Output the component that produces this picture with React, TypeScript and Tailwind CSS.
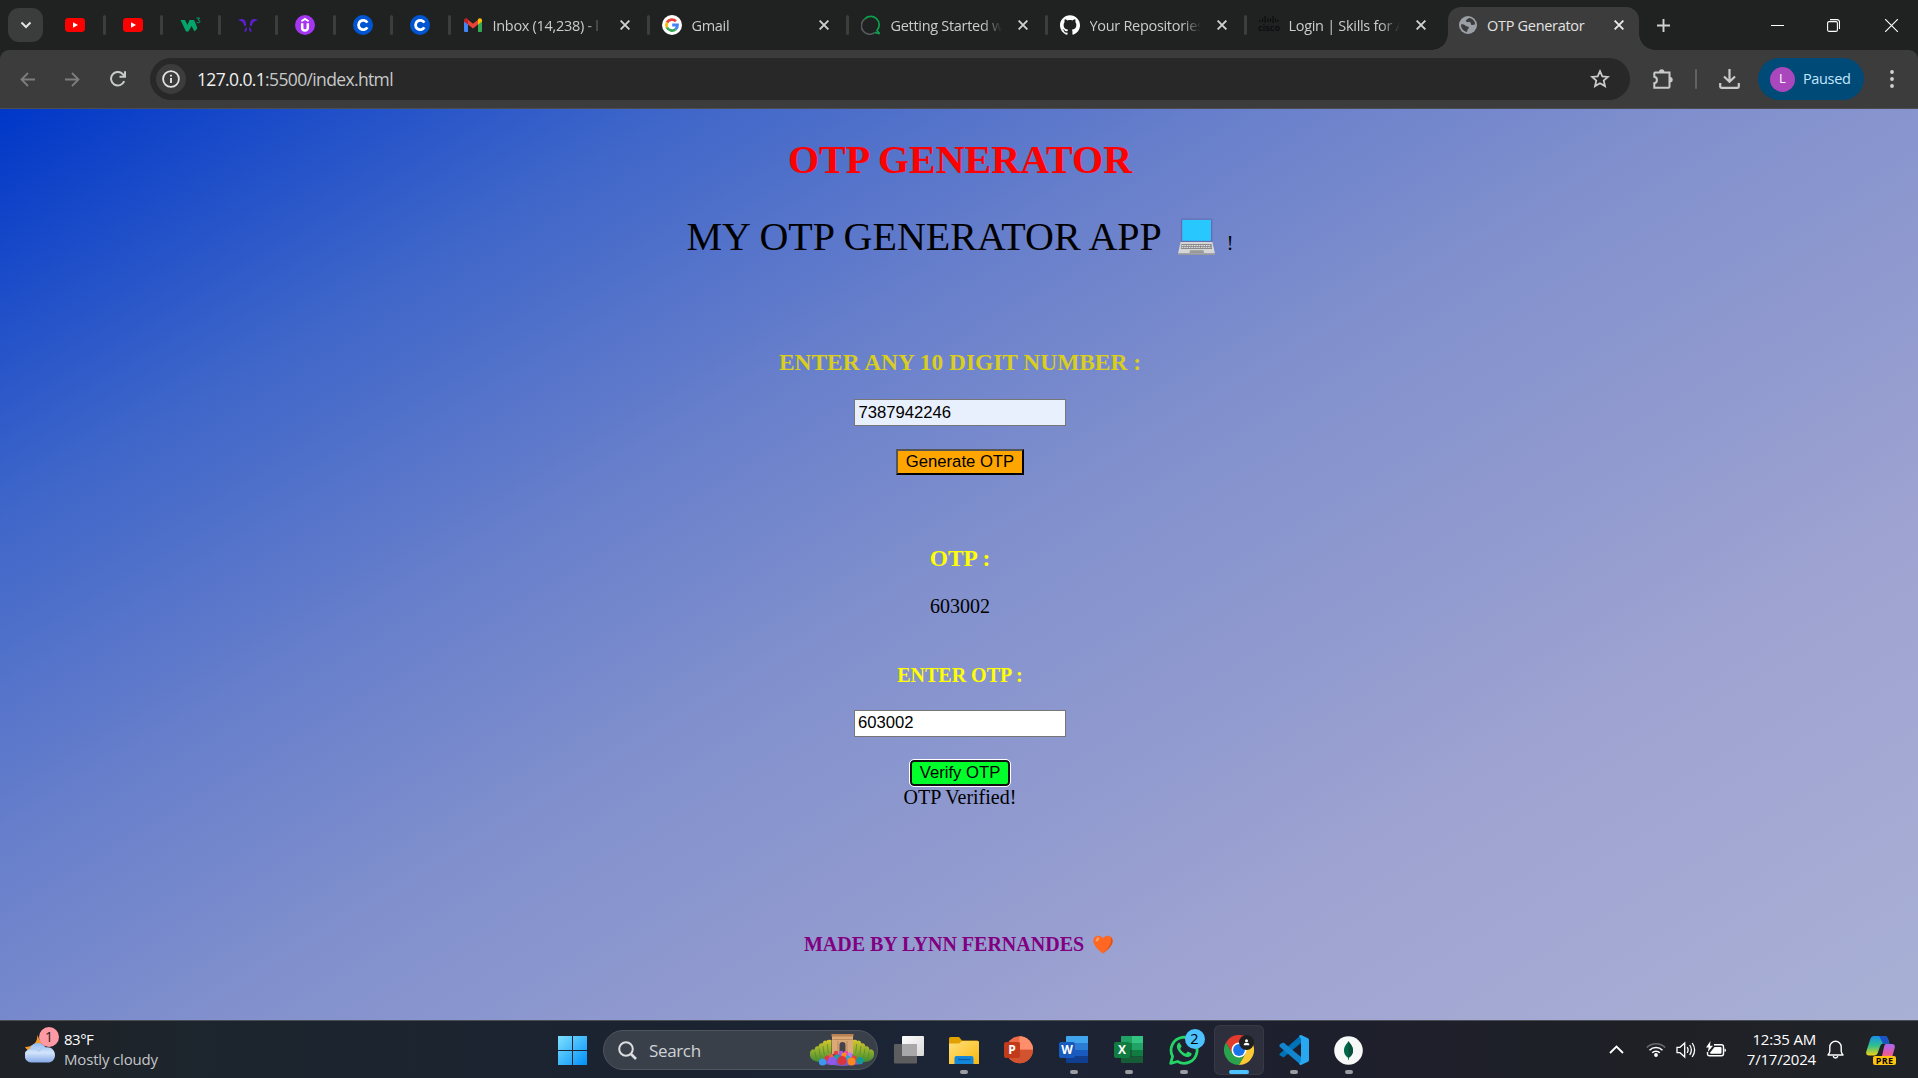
import type { ReactNode } from "react";
import { SiGithub } from "react-icons/si";

const ui = "font-['Open_Sans','Noto_Sans',sans-serif]";

/* ---------- favicons ---------- */

const YouTube = () => (
  <svg width="20" height="14" viewBox="0 0 20 14">
    <rect width="20" height="14" rx="3.4" fill="#f00" />
    <path d="M8 4.2v5.6L13 7z" fill="#fff" />
  </svg>
);

const W3 = () => (
  <svg width="21" height="16" viewBox="0 0 21 16">
    <path d="M.5 3H5l2.500 5L9.500 3H14l2.500 5.500.8 3-2.800 3-3-5.500-3 5.500H6z" fill="#04a56b" />
    <path d="M16.500 1h3L18 3c1.300 0 1.900.6 1.900 1.500 0 1.200-2 1.700-3.300.8" fill="none" stroke="#04a56b" strokeWidth="1" />
  </svg>
);

const Wings = () => (
  <svg width="20" height="14" viewBox="0 0 20 14">
    <g fill="#5b1fd0">
      <path d="M0 2c3.500-1.600 7-1.200 7.800 2.500.3 1.600.4 3-.2 3.800C6.500 8.500 5.600 7 5.300 5 4.500 3.600 2.500 3 0 2z" />
      <path d="M20 2c-3.500-1.600-7-1.200-7.800 2.500-.3 1.600-.4 3 .2 3.800 1.100.2 2-1.300 2.300-3.300C15.500 3.600 17.500 3 20 2z" />
      <path d="M8.200 9l.9 1.500-.9 3H6zM11.800 9l-.9 1.500.9 3H14z" />
    </g>
  </svg>
);

const Udemy = () => (
  <svg width="20" height="20" viewBox="0 0 20 20">
    <circle cx="10" cy="10" r="10" fill="#a435f0" />
    <path d="M6.400 6.300L10 3.900l3.600 2.400" fill="none" stroke="#fff" strokeWidth="1.800" />
    <path d="M7.200 8.300v4.600c0 3.400 5.600 3.400 5.600 0V8.300" fill="none" stroke="#fff" strokeWidth="2.500" />
  </svg>
);

const Coursera = () => (
  <svg width="20" height="20" viewBox="0 0 20 20">
    <circle cx="10" cy="10" r="10" fill="#0056d2" />
    <path d="M14.300 7.600a4.700 4.700 0 1 0 0 4.800" fill="none" stroke="#fff" strokeWidth="2.800" />
  </svg>
);

const GmailIcon = () => (
  <svg width="18" height="14" viewBox="0 0 18 14">
    <path d="M0 3v9.700c0 .8.500 1.300 1.300 1.300H4V5.500z" fill="#4285f4" />
    <path d="M18 3v9.700c0 .8-.5 1.300-1.300 1.300H14V5.500z" fill="#34a853" />
    <path d="M4 1.700l5 4 5-4v4.800l-5 4-5-4z" fill="#ea4335" />
    <path d="M0 2.300C0 0 2.500-.4 4 1v5.500L0 3.600z" fill="#c5221f" />
    <path d="M18 2.300C18 0 15.500-.4 14 1v5.500l4-2.900z" fill="#fbbc04" />
  </svg>
);

const GoogleIcon = () => (
  <svg width="20" height="20" viewBox="0 0 20 20">
    <circle cx="10" cy="10" r="10" fill="#fff" />
    <g fill="none" strokeWidth="2.800">
      <path d="M13.900 6.200A5.600 5.600 0 0 0 5 7.500" stroke="#ea4335" />
      <path d="M5 7.500a5.600 5.600 0 0 0 0 5" stroke="#fbbc05" />
      <path d="M5 12.500a5.600 5.600 0 0 0 8.600 1.800" stroke="#34a853" />
      <path d="M13.600 14.300A5.600 5.600 0 0 0 15.500 10H10.200" stroke="#4285f4" />
    </g>
  </svg>
);

const RingIcon = () => (
  <svg width="20" height="20" viewBox="0 0 20 20" fill="none" strokeWidth="1.700">
    <path d="M3.500 4.200A8.200 8.200 0 0 0 14 17.400" stroke="#55585c" />
    <path d="M3.500 4.200A8.200 8.200 0 0 1 16 15.500l2.700 3.200" stroke="#0aa14b" />
    <path d="M14 17.400l4.500 1.300" stroke="#0aa14b" />
  </svg>
);

const Cisco = () => (
  <span className="flex h-5 w-5 flex-col items-center">
    <svg width="20" height="9" viewBox="0 0 20 9" stroke="#0d0f0f" strokeWidth="1.300">
      <path d="M1 5v2M3.600 3.500V7M6.200 1v7M8.800 3.500V7M11.400 3.500V7M14 1v7M16.600 3.500V7M19 5v2" />
    </svg>
    <span className="h-2 text-[9px] leading-[8px] font-bold text-[#0d0f0f]">cisco</span>
  </span>
);

const Globe = () => (
  <svg width="18" height="18" viewBox="0 0 18 18">
    <circle cx="9" cy="9" r="9" fill="#9aa0a6" />
    <path d="M2 8.500c2.500-.8 3.500.2 4.600 1.200 1 .9 3 .3 3.300 1.800.2 1-1.500 1.300-1.400 2.600 0 .9-.2 1.500-.9 2A7.300 7.300 0 0 1 2 8.500zM10.500 2c-1.900 0-1.600 1.300-3 1.800-1 .5-.7 2 .6 2.300 1.500.3 2-.6 3.200.2.900.7.100 2.200 1.400 2.600 1 .3 1.900-.5 3.500-.5A7.300 7.300 0 0 0 10.500 2z" fill="#3c3c3c" />
  </svg>
);

const Cross = ({ color = "#d0d2d2" }: { color?: string }) => (
  <svg width="10" height="10" viewBox="0 0 10 10" stroke={color} strokeWidth="1.900">
    <path d="M.6.600l8.800 8.800M9.400.600L.6 9.400" />
  </svg>
);

/* ---------- browser chrome ---------- */

function Divider() {
  return <span className="h-5 w-[3px] shrink-0 rounded-full bg-[#3c3e3e]" />;
}

function PinnedTab({ children }: { children: ReactNode }) {
  return (
    <div className="flex h-full w-[57.5px] shrink-0 items-center">
      <span className="flex flex-1 justify-center">{children}</span>
      <Divider />
    </div>
  );
}

function Tab({ icon, title, last }: { icon: ReactNode; title: string; last?: boolean }) {
  return (
    <div className="flex h-full w-[199px] shrink-0 items-center pl-[12.500px]">
      <span className="flex w-5 shrink-0 justify-center">{icon}</span>
      <span className="ml-[9.500px] w-[112px] shrink-0 overflow-hidden pt-px text-[14.500px] leading-5 tracking-[-0.300px] whitespace-nowrap text-[#c9cccb] [mask-image:linear-gradient(to_right,#000_82%,transparent_99%)]">
        {title}
      </span>
      <span className="ml-[15px] flex w-[10px] shrink-0">
        <Cross />
      </span>
      <span className="flex-1" />
      {!last && <Divider />}
    </div>
  );
}

function TabStrip() {
  return (
    <div className="flex h-[50px] items-center bg-[#202222]">
      <button className="ml-2 flex h-[34px] w-[35px] shrink-0 items-center justify-center rounded-[11px] bg-[#3b3c3c]">
        <svg width="12" height="8" viewBox="0 0 12 8" fill="none" stroke="#e3e3e3" strokeWidth="2">
          <path d="M1.500 1.500L6 6l4.500-4.500" />
        </svg>
      </button>
      <div className="ml-[5px] flex h-full items-center">
        <PinnedTab><YouTube /></PinnedTab>
        <PinnedTab><YouTube /></PinnedTab>
        <PinnedTab><W3 /></PinnedTab>
        <PinnedTab><Wings /></PinnedTab>
        <PinnedTab><Udemy /></PinnedTab>
        <PinnedTab><Coursera /></PinnedTab>
        <PinnedTab><Coursera /></PinnedTab>
      </div>
      <Tab icon={<GmailIcon />} title="Inbox (14,238) - l" />
      <Tab icon={<GoogleIcon />} title="Gmail" />
      <Tab icon={<RingIcon />} title="Getting Started w" />
      <Tab icon={<SiGithub size={20} color="#fff" />} title="Your Repositories" />
      <Tab icon={<Cisco />} title="Login | Skills for A" last />
      <div className="flex h-full items-end">
        <span className="-ml-[13.500px] h-4 w-4 bg-[radial-gradient(circle_at_0_0,transparent_15.500px,#3c3c3c_16px)]" />
        <div className="flex h-[43px] w-[191px] items-center rounded-t-[13px] bg-[#3c3c3c] pb-[7px] pl-[11px]">
          <Globe />
          <span className="ml-2.5 w-[127px] pt-px text-[14.500px] leading-5 tracking-[-0.300px] whitespace-nowrap text-[#e3e3e3]">OTP Generator</span>
          <Cross color="#e8e8e8" />
        </div>
        <span className="h-4 w-4 bg-[radial-gradient(circle_at_100%_0,transparent_15.500px,#3c3c3c_16px)]" />
      </div>
      <svg className="ml-[2px]" width="13" height="13" viewBox="0 0 13 13" stroke="#d0d2d2" strokeWidth="1.900">
        <path d="M6.500 0v13M0 6.500h13" />
      </svg>
      <div className="mr-5 ml-auto flex items-center text-white">
        <span className="mr-[43px] h-px w-[13px] bg-white" />
        <svg className="mr-[45px]" width="13" height="13" viewBox="0 0 13 13" fill="none" stroke="#fff" strokeWidth="1.100">
          <rect x=".6" y="2.600" width="9.800" height="9.800" rx="1.500" />
          <path d="M3 .6h7.200a2.300 2.300 0 0 1 2.300 2.300V10" />
        </svg>
        <svg width="13" height="13" viewBox="0 0 13 13" stroke="#fff" strokeWidth="1.100">
          <path d="M0 0l13 13M13 0L0 13" />
        </svg>
      </div>
    </div>
  );
}

function Toolbar() {
  return (
    <div className="bg-[#202222]">
      <div className="flex h-[59px] items-center rounded-t-[9px] border-b border-[#4b4d50] bg-[#3c3c3c]">
        <svg className="ml-5" width="15" height="15" viewBox="0 0 15 15" fill="none" stroke="#7c7d7d" strokeWidth="1.800">
          <path d="M15 7.500H1.500M8 1L1.500 7.500 8 14" />
        </svg>
        <svg className="ml-[30px]" width="15" height="15" viewBox="0 0 15 15" fill="none" stroke="#7c7d7d" strokeWidth="1.800">
          <path d="M0 7.500h13.500M7 1l6.500 6.500L7 14" />
        </svg>
        <svg className="ml-[30px]" width="16" height="16" viewBox="0 0 16 16" fill="none" stroke="#c9cbcb" strokeWidth="2">
          <path d="M14.200 10.200A6.800 6.800 0 1 1 13 3.300L14.500 5" />
          <path d="M9.500 5.700h5.500V.3" />
        </svg>
        <div className="ml-[24px] flex h-[42px] w-[1480px] shrink-0 items-center rounded-full bg-[#282828] pr-5 pl-[6px]">
          <span className="flex h-[30px] w-[30px] shrink-0 items-center justify-center rounded-full bg-[#3c3c3c]">
            <svg width="18" height="18" viewBox="0 0 18 18">
              <circle cx="9" cy="9" r="7.900" fill="none" stroke="#e3e3e3" strokeWidth="1.800" />
              <path d="M9 8v5M9 4.800v1.800" stroke="#e3e3e3" strokeWidth="1.900" />
            </svg>
          </span>
          <span className="ml-[11px] text-[17.500px] leading-6 tracking-[-0.640px] text-[#c7c9c9]">
            <span className="text-[#f0f0f0]">127.0.0.1</span>:5500/index.html
          </span>
          <svg className="ml-auto" width="20" height="20" viewBox="0 0 20 20" fill="none" stroke="#c9cbcb" strokeWidth="1.800">
            <path d="M10 2.200l2.300 5.200 5.600.5-4.200 3.700 1.300 5.500L10 14.200l-5 2.900 1.300-5.500L2.100 7.900l5.600-.5z" />
          </svg>
        </div>
        <svg className="ml-[22px]" width="22" height="22" viewBox="0 0 22 22">
          <path
            d="M3 4.500h14.500V18.700c0 .6-.4 1-1 1H2.300v-4.500c3.500-.4 3.500-6 0-6.400V5.500c0-.6.300-1 .7-1z"
            fill="none"
            stroke="#c9cbcb"
            strokeWidth="2"
          />
          <path d="M7 4a2.700 2.700 0 0 1 5.400 0zM18 9a2.700 2.700 0 0 1 0 5.400z" fill="#c9cbcb" />
        </svg>
        <span className="ml-[21px] h-5 w-0.5 rounded bg-[#5f6162]" />
        <svg className="ml-[22px]" width="21" height="20" viewBox="0 0 21 20" fill="none" stroke="#c9cbcb" strokeWidth="2.200">
          <path d="M10.500 0v12.500M5 7.500l5.500 5.300L16 7.500" />
          <path d="M1.200 14v3.600c0 .7.500 1.200 1.200 1.200h16.200c.7 0 1.200-.5 1.200-1.200V14" />
        </svg>
        <div className="ml-[18px] flex h-[42px] w-[106px] items-center rounded-full bg-[#004a77] pl-3">
          <span className="flex h-[25px] w-[25px] items-center justify-center rounded-full bg-[#ab47bc] text-[13px] text-white">L</span>
          <span className="ml-2 text-[14.500px] tracking-[-0.350px] text-[#c2e7ff]">Paused</span>
        </div>
        <svg className="ml-[26px]" width="4" height="18" viewBox="0 0 4 18" fill="#d0d2d2">
          <circle cx="2" cy="2" r="1.900" />
          <circle cx="2" cy="9" r="1.900" />
          <circle cx="2" cy="16" r="1.900" />
        </svg>
      </div>
    </div>
  );
}

/* ---------- page ---------- */

const Laptop = () => (
  <svg className="ml-[16px] h-[37px] w-[37px] translate-y-[5px]" viewBox="0 0 37 37">
    <rect x="2.800" y=".4" width="31.600" height="24" rx="1.600" fill="#6b6bb0" />
    <rect x="4.200" y="1.800" width="28.800" height="21" fill="#28c8ff" />
    <path d="M2.600 24h31.800L37 35.500H0z" fill="#d6d6d6" />
    <path d="M0 35.500h37V37H0z" fill="#999" />
    <path d="M3.500 26h30l.6 5H2.900z" fill="#8a8a8a" />
    <path d="M4 27.500h29M3.700 29.400h29.600" stroke="#e6e6e6" strokeWidth="1" strokeDasharray="1.600 .8" />
    <path d="M12 32.300h13.500l.5 2.700H11.500z" fill="#999" />
  </svg>
);

const Heart = () => (
  <svg className="ml-[9px] h-[19px] w-5 translate-y-[3px]" viewBox="0 0 20 19">
    <path d="M10 18.600C6 15.500.3 11 .3 5.800.3.300 7.500-1.200 10 3.300 12.500-1.200 19.700.300 19.700 5.800 19.700 11 14 15.500 10 18.600z" fill="#ff6723" />
    <path d="M18 2.200c3 3 1.500 8-2.500 11.500L10 18.600c5-5 8.500-9.500 8-16.400z" fill="#d9531f" />
    <ellipse cx="4.500" cy="4.300" rx="1.500" ry="2.400" transform="rotate(35 4.500 4.300)" fill="#ff9a65" />
  </svg>
);

function Page() {
  return (
    <main className="flex h-[911px] flex-col items-center bg-[linear-gradient(149deg,#0037c8_0%,#3d65c9_19%,#667ecb_35%,#8190cd_50%,#9ea3d1_76%,#a9b0d5_100%)] pl-[2px] font-['Liberation_Serif','Times_New_Roman',serif] text-[20px] leading-[23px] text-black">
      <h1 className="mt-[28px] text-[40px] leading-[46px] font-bold text-[#ff0000]">OTP GENERATOR</h1>
      <p className="mt-[30px] flex h-[46px] items-baseline whitespace-nowrap">
        <span className="text-[40px] leading-[46px]">MY OTP GENERATOR APP</span>
        <Laptop />
        <span className="ml-[12px]">!</span>
      </p>
      <h3 className="mt-[90px] text-[23.400px] leading-[27px] font-bold text-[#d9cd20]">ENTER ANY 10 DIGIT NUMBER :</h3>
      <input
        readOnly
        value="7387942246"
        className="mt-[23px] h-[27px] w-[212px] border border-[#767676] bg-[#e8f0fe] px-[3.500px] font-['Liberation_Sans',Arial,sans-serif] text-[16.670px] outline-none"
      />
      <button className="mt-[23px] flex h-[26px] w-[128px] items-center justify-center border-2 border-t-[#555] border-r-black border-b-black border-l-[#555] bg-[#ffa500] pb-px font-['Liberation_Sans',Arial,sans-serif] text-[16.670px]">
        Generate OTP
      </button>
      <h3 className="mt-[70px] text-[23.400px] leading-[27px] font-bold text-[#ffff00]">OTP :</h3>
      <p className="mt-[23px]">603002</p>
      <h4 className="mt-[46px] font-bold text-[#ffff00]">ENTER OTP :</h4>
      <input
        readOnly
        value="603002"
        className="mt-[23px] h-[27px] w-[212px] border border-[#767676] bg-white px-[3px] pb-0.5 font-['Liberation_Sans',Arial,sans-serif] text-[16.670px] outline-none"
      />
      <button className="mt-[23px] flex h-[26px] w-[100px] items-center justify-center rounded-[4px] border-2 border-[#101010] bg-[#00ff2b] pb-0.5 font-['Liberation_Sans',Arial,sans-serif] text-[16.670px] outline outline-white">
        Verify OTP
      </button>
      <p>OTP Verified!</p>
      <h4 className="mt-[123px] mr-[3px] flex items-baseline font-bold text-[#800080]">
        MADE BY LYNN FERNANDES
        <Heart />
      </h4>
    </main>
  );
}

/* ---------- taskbar ---------- */

const Weather = () => (
  <svg width="34" height="36" viewBox="0 0 34 36">
    <defs>
      <linearGradient id="cloud" x1="0" y1="0" x2="0" y2="1">
        <stop offset="0" stopColor="#8fb9f2" />
        <stop offset=".5" stopColor="#d3e4fb" />
        <stop offset="1" stopColor="#86a9e8" />
      </linearGradient>
    </defs>
    <path d="M12 7c1.200 7-4 12-12 12 3 6 15 7 18-1z" fill="#f59a23" />
    <path d="M6 34.500a7 7 0 0 1-1-13.800C6.500 14 17 12.500 20.500 19.500c5-1.500 9.500 2.500 9.500 7.500s-3.500 7.500-7 7.500z" fill="url(#cloud)" />
    <path d="M5 21c4-1 7 0 9 2 2-2.500 4-3.500 6.500-3.500" stroke="#aecbf6" strokeWidth="1.500" fill="none" />
  </svg>
);

const Start = () => (
  <svg width="29" height="29" viewBox="0 0 29 29">
    <defs>
      <linearGradient id="win" x1="0" y1="0" x2="1" y2="1">
        <stop offset="0" stopColor="#7fe0ff" />
        <stop offset="1" stopColor="#0090f8" />
      </linearGradient>
    </defs>
    <path d="M0 0h14v14H0zM15 0h14v14H15zM0 15h14v14H0zM15 15h14v14H15z" fill="url(#win)" />
  </svg>
);

const SearchArt = () => (
  <svg width="64" height="32" viewBox="0 0 64 32">
    <defs>
      <linearGradient id="hedge" x1="0" y1="0" x2="0" y2="1">
        <stop offset="0" stopColor="#d4c62c" />
        <stop offset=".5" stopColor="#8fae2e" />
        <stop offset="1" stopColor="#3d8a34" />
      </linearGradient>
    </defs>
    <path d="M0 18q2-4 4.500-2 .5-5 4-3.500 1-4 4-3 1-4 4-2.500 1-2 5-1v22H9Q1 27 0 22z" fill="url(#hedge)" />
    <path d="M64 18q-2-4-4.500-2-.5-5-4-3.500-1-4-4-3-1-4-4-2.500-1-2-5-1v22h13q7-1 8.500-6z" fill="url(#hedge)" />
    <path d="M4.800 17.500l1.500 7M9 14.500l1.500 9M13 12l1.300 9M17.300 10l1 9M59.200 17.500l-1.500 7M55 14.500l-1.500 9M51 12l-1.300 9M46.700 10l-1 9" stroke="#5c8a2c" strokeWidth=".8" />
    <path d="M22 0h21v20H22z" fill="#dba877" />
    <path d="M21.500 0h22v2.500h-22z" fill="#b98253" />
    <path d="M22.500 5.500h20M28 7v12M37 7v12" stroke="#b98253" strokeWidth=".8" />
    <path d="M29.500 20v-9a3 3 0 0 1 6 0v9z" fill="#45424c" />
    <g>
      <path d="M20 24q12-9 24 0l9 6-20 2-21-2z" fill="#7b5cc4" />
      <circle cx="26" cy="19" r="2.300" fill="#e4423f" />
      <circle cx="31" cy="19" r="2.300" fill="#9b5cf0" />
      <circle cx="36" cy="19" r="2.300" fill="#f04d9a" />
      <circle cx="21" cy="22" r="2.500" fill="#e4653f" />
      <circle cx="27" cy="23" r="2.600" fill="#16a5a5" />
      <circle cx="34" cy="21" r="2.600" fill="#ff8a1f" />
      <circle cx="40" cy="21" r="2.500" fill="#b37cf6" />
      <circle cx="44" cy="24" r="2.600" fill="#e4423f" />
      <circle cx="38" cy="24" r="2.500" fill="#2aa9c9" />
      <circle cx="17" cy="24" r="2.600" fill="#d93a4b" />
      <circle cx="12.500" cy="28" r="3.600" fill="#3f97f2" />
      <circle cx="22" cy="27" r="4" fill="#9457ec" />
      <circle cx="32" cy="26.500" r="4.600" fill="#d8353f" />
      <circle cx="41.500" cy="27.500" r="4" fill="#ff861c" />
      <circle cx="50" cy="26.500" r="3.500" fill="#129a98" />
    </g>
  </svg>
);

const TaskView = () => (
  <svg width="30" height="28" viewBox="0 0 30 28">
    <defs>
      <linearGradient id="tv" x1="0" y1="0" x2="1" y2="1">
        <stop offset="0" stopColor="#fff" />
        <stop offset="1" stopColor="#d8d8d8" />
      </linearGradient>
    </defs>
    <rect y="8" width="23" height="19.500" rx="1" fill="#5d5d5f" />
    <rect x="8" width="22" height="20" rx="1" fill="url(#tv)" />
    <rect x="8" y="8" width="15" height="12" fill="#a8a8aa" />
  </svg>
);

const Folder = () => (
  <svg width="30" height="27" viewBox="0 0 30 27">
    <defs>
      <linearGradient id="fold" x1="0" y1="0" x2="1" y2="1">
        <stop offset="0" stopColor="#ffe07a" />
        <stop offset="1" stopColor="#f9b90f" />
      </linearGradient>
    </defs>
    <path d="M0 1.500Q0 0 1.500 0H10l3 3.500h15q2 0 2 2V12H0z" fill="#e2a100" />
    <path d="M0 6.500h10L13 4h15.500Q30 4 30 5.500V27H0z" fill="url(#fold)" />
    <path d="M5.500 27v-6q0-2 2-2h15q2 0 2 2v6z" fill="#1286d8" />
    <path d="M9 22.500h12.500" stroke="#0b5ca8" strokeWidth="1.200" />
  </svg>
);

function Letter({ children, className }: { children: string; className: string }) {
  return (
    <span className={`absolute top-[6px] left-0 flex h-4 w-4 items-center justify-center rounded-[2px] text-[12px] leading-4 font-bold text-white ${className}`}>
      {children}
    </span>
  );
}

const PowerPoint = () => (
  <span className="relative h-[28px] w-[29px]">
    <svg width="29" height="28" viewBox="0 0 29 28">
      <circle cx="15.500" cy="13.700" r="13.500" fill="#ed6c47" />
      <path d="M15.500.2A13.500 13.500 0 0 1 29 13.700H15.500z" fill="#ff8f6b" />
      <path d="M29 13.700a13.500 13.500 0 0 1-27 0z" fill="#d35230" />
    </svg>
    <Letter className="bg-[#c13b1b]">P</Letter>
  </span>
);

const Word = () => (
  <span className="relative h-[28px] w-[29px]">
    <svg width="29" height="28" viewBox="0 0 29 28">
      <path d="M7 1q0-1 1-1h21v7H7z" fill="#41a5ee" />
      <path d="M7 7h22v7H7z" fill="#2b7cd3" />
      <path d="M7 14h22v6.500H7z" fill="#185abd" />
      <path d="M7 20.500h22V27H8q-1 0-1-1z" fill="#103f91" />
    </svg>
    <Letter className="bg-[#185abd]">W</Letter>
  </span>
);

const Excel = () => (
  <span className="relative h-[28px] w-[29px]">
    <svg width="29" height="28" viewBox="0 0 29 28">
      <path d="M7 1q0-1 1-1h10v7H7z" fill="#21a366" />
      <path d="M18 0h11v7H18z" fill="#33c481" />
      <path d="M7 7h11v7H7z" fill="#107c41" />
      <path d="M18 7h11v7H18z" fill="#21a366" />
      <path d="M7 14h11v6.500H7z" fill="#185c37" />
      <path d="M18 14h11v6.500H18z" fill="#107c41" />
      <path d="M7 20.500h22V27H8q-1 0-1-1z" fill="#185c37" />
    </svg>
    <Letter className="bg-[#107c41]">X</Letter>
  </span>
);

const WhatsApp = () => (
  <span className="relative h-[30px] w-[30px]">
    <svg width="30" height="30" viewBox="0 0 30 30">
      <path d="M1.700 28.300l1.900-6.900A13 13 0 1 1 8.500 26.500z" fill="none" stroke="#25d366" strokeWidth="2.800" strokeLinejoin="round" />
      <path d="M10.500 7.500c-2.500 1-3.500 4-1.500 7.500 2.500 4.500 7 7.500 10.500 7 2.500-.4 3.500-2.500 3-3.700l-3.700-1.800-2 2.200c-2.600-1-4.600-3-5.600-5.300l1.500-2z" fill="#25d366" />
    </svg>
    <span className="absolute -top-[6px] left-4 flex h-5 w-5 items-center justify-center rounded-full bg-[#4cc2ff] text-[14.500px] leading-5 text-black">2</span>
  </span>
);

const Chrome = () => (
  <span className="relative h-[30px] w-[30px]">
    <svg width="30" height="30" viewBox="0 0 30 30">
      <path d="M2 7.500A15 15 0 0 1 28 7.500H15L8.500 18.700z" fill="#e33b2e" />
      <path d="M2 7.500A15 15 0 0 0 15 30l6.500-11.300H8.500z" fill="#2ba24c" />
      <path d="M28 7.500A15 15 0 0 1 15 30l6.500-11.300L15 7.500z" fill="#fcc934" />
      <circle cx="15" cy="15" r="7.500" fill="#fff" />
      <circle cx="15" cy="15" r="5.900" fill="#1a73e8" />
    </svg>
    <svg className="absolute top-0 left-[15px]" width="15" height="15" viewBox="0 0 15 15">
      <circle cx="7.500" cy="7.500" r="7.500" fill="#1d1f21" />
      <circle cx="7.500" cy="5.800" r="1.500" fill="#fff" />
      <path d="M4.700 10.200q0-2.400 2.800-2.400t2.800 2.400z" fill="#fff" />
    </svg>
  </span>
);

const VSCode = () => (
  <svg width="30" height="30" viewBox="0 0 30 30">
    <path d="M22 0v8L4.500 22.500 1.700 20.800Q-.5 20 1 18.500z" fill="#0072b8" />
    <path d="M22 30v-8L4.500 7.500 1.700 8.700Q-.5 10.500 1 12z" fill="#1285cf" />
    <path d="M22 0l7 3.300q1 .5 1 1.700v20q0 1.200-1 1.700L22 30q-1 0-2-1l2-3V4l-2-3q1-1 2-1z" fill="#27a8f0" />
  </svg>
);

const Mongo = () => (
  <svg width="29" height="29" viewBox="0 0 29 29">
    <circle cx="14.500" cy="14.500" r="14.300" fill="#f7f8f8" />
    <path d="M14.500 5c1 2.500 4.500 4.500 4.500 9.500 0 4-2.500 6-4 7.200l-.2 2.300h-.6l-.2-2.300c-1.500-1.200-4-3.200-4-7.200 0-5 3.500-7 4.500-9.500z" fill="#00684a" />
    <path d="M14.500 5c1 2.500 4.500 4.500 4.500 9.500 0 4-2.500 6-4.500 7.200z" fill="#0b4f3c" />
  </svg>
);

function TaskbarItem({ children, mark = "dot" }: { children: ReactNode; mark?: "dot" | "none" | "active" }) {
  return (
    <div className="flex h-full w-[55px] shrink-0 justify-center pt-1">
      <div className={`flex h-[50px] w-[50px] flex-col items-center rounded-[6px] ${mark === "active" ? "bg-[#2d303c] ring-1 ring-[#363a45] ring-inset" : ""}`}>
        <span className="flex h-[45px] items-center pt-[5px]">{children}</span>
        {mark === "dot" && <span className="h-1 w-2 rounded-full bg-[#9b9ca1]" />}
        {mark === "active" && <span className="h-1 w-5 rounded-full bg-[#4cc2ff]" />}
      </div>
    </div>
  );
}

const Copilot = () => (
  <span className="relative h-[30px] w-[30px]">
    <svg width="29" height="28" viewBox="0 0 29 28">
      <defs>
        <linearGradient id="cp1" x1="0" y1="0" x2="0" y2="1">
          <stop offset="0" stopColor="#1c8fe8" />
          <stop offset=".5" stopColor="#2fc08c" />
          <stop offset="1" stopColor="#f2d313" />
        </linearGradient>
        <linearGradient id="cp2" x1="0" y1="0" x2="0" y2="1">
          <stop offset="0" stopColor="#a868f5" />
          <stop offset=".6" stopColor="#e858a0" />
          <stop offset="1" stopColor="#ff8a4a" />
        </linearGradient>
      </defs>
      <path d="M8 0h11q2 0 3 3l1.500 4.500H17q-2 0-3 3l-2.500 7q-1 2-3 2H3q-3.500 0-2.700-4L4 4q1-4 4-4z" fill="url(#cp1)" />
      <path d="M13 0h6q2 0 3 3l1.500 4.500H17z" fill="#1c53c9" />
      <path d="M20 8h6q3.500 0 2.700 4l-2.600 9q-1 3-4 3H12q3-1 4-4l2-9q.5-3 2-3z" fill="url(#cp2)" />
    </svg>
    <span className="absolute top-[20px] left-[7px] flex h-[9px] w-[23px] items-center justify-center rounded-[2px] bg-[#ffc20e] text-[9px] leading-[9px] font-bold tracking-[0.300px] text-black">
      PRE
    </span>
  </span>
);

function Taskbar() {
  return (
    <div className="flex h-[58px] items-stretch border-t border-[#4b4e54] bg-[linear-gradient(to_right,#1f2226_0%,#1c252e_12%,#1b2331_35%,#1c2536_52%,#1e1f2d_68%,#1e2026_85%,#202327_100%)]">
      <div className="relative flex w-[558px] shrink-0 pl-[25px]">
        <div className="pt-[7px]">
          <Weather />
        </div>
        <span className="absolute top-[6px] left-[39px] flex h-5 w-5 items-center justify-center rounded-full bg-[#ff99a4] text-[14px] leading-5 text-[#1c1c1c]">1</span>
        <div className="ml-[5px] flex flex-col pt-[8px] text-[15px] leading-5 whitespace-nowrap">
          <span className="tracking-[-0.500px] text-white">83°F</span>
          <span className="tracking-[-0.170px] text-[#c4c6c9]">Mostly cloudy</span>
        </div>
      </div>
      <div className="pt-[15px]">
        <Start />
      </div>
      <div className="mt-[9px] ml-4 flex h-10 w-[275px] shrink-0 items-center rounded-full border border-[#4f555e] bg-[#3a404a] pl-3.5">
        <svg width="19" height="19" viewBox="0 0 19 19" fill="none" stroke="#dcdee0" strokeWidth="2">
          <circle cx="8" cy="8" r="6.800" />
          <path d="M13 13l5 5" strokeWidth="2.600" />
        </svg>
        <span className="ml-3 pt-px text-[17px] leading-6 tracking-[-0.350px] text-[#cfd2d6]">Search</span>
        <span className="mr-[3px] ml-auto">
          <SearchArt />
        </span>
      </div>
      <div className="ml-[3px] flex">
        <TaskbarItem mark="none"><TaskView /></TaskbarItem>
        <TaskbarItem><Folder /></TaskbarItem>
        <TaskbarItem mark="none"><PowerPoint /></TaskbarItem>
        <TaskbarItem><Word /></TaskbarItem>
        <TaskbarItem><Excel /></TaskbarItem>
        <TaskbarItem><WhatsApp /></TaskbarItem>
        <TaskbarItem mark="active"><Chrome /></TaskbarItem>
        <TaskbarItem><VSCode /></TaskbarItem>
        <TaskbarItem><Mongo /></TaskbarItem>
      </div>
      <div className="mr-[22px] ml-auto flex items-center">
        <svg width="15" height="9" viewBox="0 0 15 9" fill="none" stroke="#fff" strokeWidth="1.800">
          <path d="M1 8l6.500-6.500L14 8" />
        </svg>
        <svg className="ml-[22px]" width="20" height="15" viewBox="0 0 20 15" fill="none" strokeWidth="1.600">
          <path d="M.8 5.500a13 13 0 0 1 18.400 0" stroke="#66696d" />
          <path d="M3.500 8.200a9.200 9.200 0 0 1 13 0M6.200 10.800a5.400 5.400 0 0 1 7.600 0" stroke="#fff" />
          <circle cx="10" cy="13" r="1.900" fill="#fff" />
        </svg>
        <svg className="ml-[10px]" width="20" height="18" viewBox="0 0 20 18" fill="none" stroke="#fff" strokeWidth="1.300">
          <path d="M1 6.300h3L8.700 2v14L4 11.700H1z" />
          <path d="M11.200 6.200q1.800 2.800 0 5.600M13.700 4q3.300 5 0 10M16.200 2q4.800 7 0 14" />
        </svg>
        <svg className="ml-[10px]" width="20" height="17" viewBox="0 0 20 17">
          <path d="M8 3.800h7.500q2 0 2 2v7q0 2-2 2H3.500q-2 0-2-2V11" fill="none" stroke="#fff" strokeWidth="1.400" />
          <path d="M8.500 6h6q1 0 1 1v4.700q0 1-1 1H5q-1 0-1-1z" fill="#fff" />
          <path d="M18.500 7.500q1.500.3 1.500 1.800t-1.500 1.700z" fill="#fff" />
          <path d="M4.500 0L0 6.500h2.700L1.800 11 7 4.700H4z" fill="#fff" />
        </svg>
        <div className="mb-0.5 ml-[14px] flex w-[76px] flex-col text-right text-[15px] leading-5 whitespace-nowrap text-white">
          <span className="tracking-[-0.200px]">12:35 AM</span>
          <span className="tracking-[-0.200px]">7/17/2024</span>
        </div>
        <svg className="ml-[11px]" width="17" height="19" viewBox="0 0 17 19" fill="none" stroke="#fff" strokeWidth="1.400">
          <path d="M1 15q1.800-2 1.800-4V7a5.700 5.700 0 0 1 11.400 0v4q0 2 1.800 4z" strokeLinejoin="round" />
          <path d="M6.200 15.800q.5 2.200 2.300 2.200t2.300-2.200" />
        </svg>
        <span className="ml-[22px] flex pt-0.5">
          <Copilot />
        </span>
      </div>
    </div>
  );
}

export default function App() {
  return (
    <div className={`flex h-[1078px] w-[1918px] flex-col overflow-hidden ${ui}`}>
      <TabStrip />
      <Toolbar />
      <Page />
      <Taskbar />
    </div>
  );
}
